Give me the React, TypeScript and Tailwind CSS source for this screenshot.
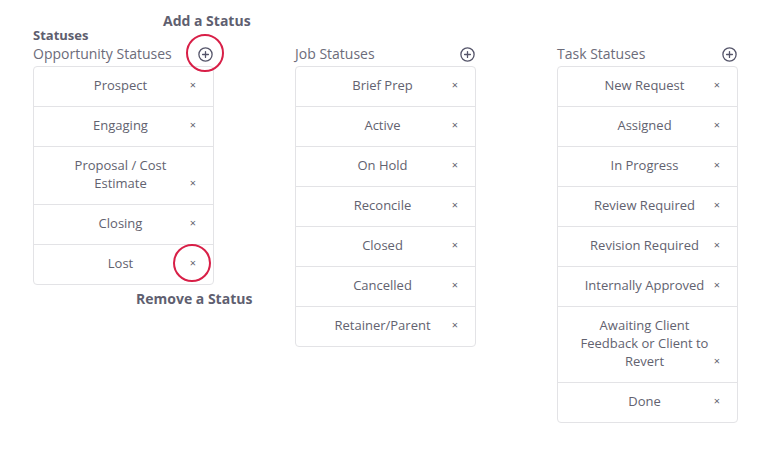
import React from 'react'

interface StatusColumn {
  title: string
  items: string[]
}

const columns: StatusColumn[] = [
  {
    title: 'Opportunity Statuses',
    items: ['Prospect', 'Engaging', 'Proposal / Cost Estimate', 'Closing', 'Lost'],
  },
  {
    title: 'Job Statuses',
    items: ['Brief Prep', 'Active', 'On Hold', 'Reconcile', 'Closed', 'Cancelled', 'Retainer/Parent'],
  },
  {
    title: 'Task Statuses',
    items: [
      'New Request',
      'Assigned',
      'In Progress',
      'Review Required',
      'Revision Required',
      'Internally Approved',
      'Awaiting Client Feedback or Client to Revert',
      'Done',
    ],
  },
]

function PlusCircle() {
  return (
    <svg width="15" height="15" viewBox="0 0 15 15" fill="none" stroke="#55556a" strokeWidth="1.3">
      <circle cx="7.5" cy="7.5" r="6.6" />
      <path d="M7.5 4.6v5.8M4.6 7.5h5.8" strokeLinecap="round" />
    </svg>
  )
}

function Column({ col }: { col: StatusColumn }) {
  return (
    <div className="w-[181px]">
      <div className="flex h-[16px] items-center justify-between pr-[1px]">
        <span className="text-[14px] leading-[16px] text-[#6c6c7a]">{col.title}</span>
        <PlusCircle />
      </div>
      <div className="mt-[4px] rounded-[4px] border border-[#e3e3e6] bg-white">
        {col.items.map((item, i) => (
          <div
            key={item}
            className={'grid pt-[9px] pb-[12px] ' + (i > 0 ? 'border-t border-[#e3e3e6]' : '')}
          >
            {/* text and remove button share one cell; the × sits on the last line */}
            <div className="col-start-1 row-start-1 pl-[14px] pr-[20px] text-center text-[13px] leading-[18px] text-[#62626f]">
              {item}
            </div>
            <span className="col-start-1 row-start-1 mr-[17px] self-end justify-self-end text-[11px] leading-[18px] text-[#62626f]">
              ×
            </span>
          </div>
        ))}
      </div>
    </div>
  )
}

export default function App() {
  return (
    <div
      className="relative h-[456px] w-[771px] bg-white"
      style={{ fontFamily: '"Open Sans", "Noto Sans", sans-serif' }}
    >
      <div className="pl-[33px] pt-[27px]">
        <div className="text-[13px] font-bold leading-[16px] text-[#5e5e6e]">Statuses</div>
        <div className="mt-[3px] flex items-start gap-[81px]">
          {columns.map((c) => (
            <Column key={c.title} col={c} />
          ))}
        </div>
      </div>

      {/* annotations drawn over the page */}
      <div className="absolute left-[163px] top-[11px] text-[14px] font-bold leading-[20px] text-[#5f5f70]">
        Add a Status
      </div>
      <div className="absolute left-[186px] top-[34px] h-[38px] w-[38px] rounded-full border-2 border-[#d81f47]" />
      <div className="absolute left-[173px] top-[244px] h-[38px] w-[38px] rounded-full border-2 border-[#d81f47]" />
      <div className="absolute left-[136px] top-[289px] text-[14px] font-bold leading-[20px] text-[#5f5f70]">
        Remove a Status
      </div>
    </div>
  )
}
